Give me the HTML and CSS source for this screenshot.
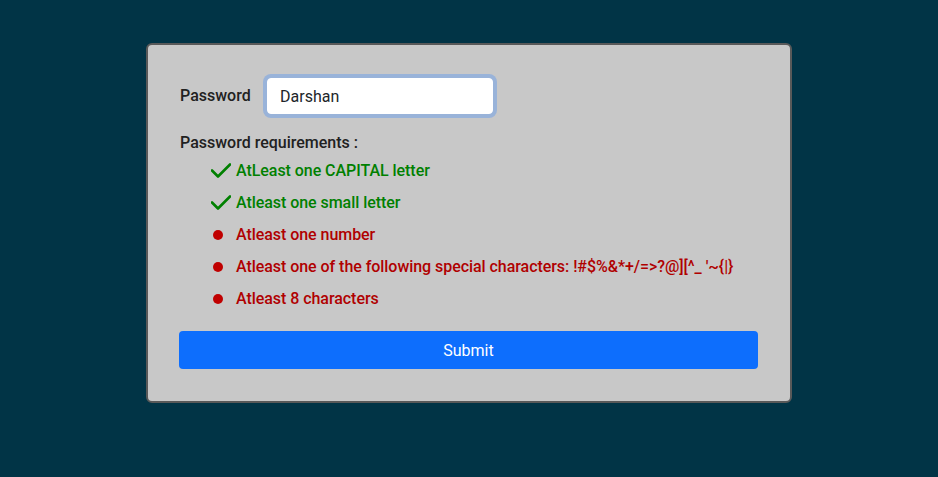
FILE: index.html
```html
<!DOCTYPE html>
<html lang="en">
<head>
<meta charset="utf-8">
<title>Password</title>
<link rel="stylesheet" href="styles.css">
</head>
<body>
<div class="card">
  <div class="field-row">
    <label class="field-label" for="pw">Password</label>
    <input class="field-input" id="pw" type="text" value="Darshan">
  </div>
  <div class="req-title">Password requirements :</div>
  <ul class="req-list">
    <li class="req ok"><span class="icon"><svg width="20" height="16" viewBox="0 0 20 16"><path d="M1 7.5 L7 13.5 L19 1.5" fill="none" stroke="#008000" stroke-width="2.6" stroke-linecap="round" stroke-linejoin="round"/></svg></span>AtLeast one CAPITAL letter</li>
    <li class="req ok"><span class="icon"><svg width="20" height="16" viewBox="0 0 20 16"><path d="M1 7.5 L7 13.5 L19 1.5" fill="none" stroke="#008000" stroke-width="2.6" stroke-linecap="round" stroke-linejoin="round"/></svg></span>Atleast one small letter</li>
    <li class="req bad"><span class="icon"><span class="dot"></span></span>Atleast one number</li>
    <li class="req bad"><span class="icon"><span class="dot"></span></span>Atleast one of the following special characters: !#$%&amp;*+/=&gt;?@][^_ '~{|}</li>
    <li class="req bad"><span class="icon"><span class="dot"></span></span>Atleast 8 characters</li>
  </ul>
  <button class="submit" type="button">Submit</button>
</div>
</body>
</html>
```
FILE: styles.css
```css
html, body {
  margin: 0;
  padding: 0;
}
body {
  background: #013446;
  font-family: Roboto, "Liberation Sans", sans-serif;
  font-size: 16px;
  color: #222;
  padding-top: 43px;
  height: 477px;
  box-sizing: border-box;
}
.card {
  width: 646px;
  box-sizing: border-box;
  margin: 0 auto;
  background: #c8c8c8;
  border: 2px solid #595959;
  border-radius: 6px;
  padding: 33px 32px 32px 31px;
}
.field-row {
  display: flex;
  align-items: center;
  margin-left: 1px;
}
.field-label {
  font-weight: 500;
  color: #212121;
  width: 87px;
  line-height: 24px;
}
.field-input {
  width: 226px;
  height: 36px;
  box-sizing: border-box;
  border: 1px solid #fff;
  border-radius: 4px;
  background: #fff;
  padding: 0 12px;
  font-family: Roboto, "Liberation Sans", sans-serif;
  font-size: 16px;
  color: #212529;
  outline: none;
  box-shadow: 0 0 0 4px #99b3d9;
}
.req-title {
  margin-top: 17px;
  margin-left: 1px;
  font-weight: 500;
  color: #212121;
  line-height: 24px;
}
.req-list {
  list-style: none;
  margin: 0;
  padding: 0 0 0 32px;
}
.req {
  display: flex;
  align-items: center;
  line-height: 32px;
  font-weight: 500;
  letter-spacing: -0.05px;
}
.req.ok { color: #008000; }
.req.bad { color: #b00000; }
.icon {
  width: 20px;
  margin-right: 5px;
  display: flex;
  align-items: center;
}
.dot {
  width: 10px;
  height: 10px;
  border-radius: 50%;
  background: #c00000;
  margin-left: 2px;
}
.submit {
  display: block;
  width: 100%;
  margin-top: 16px;
  height: 38px;
  border: none;
  border-radius: 4px;
  background: #0d6efd;
  color: #fff;
  font-family: Roboto, "Liberation Sans", sans-serif;
  font-size: 16px;
}
```
